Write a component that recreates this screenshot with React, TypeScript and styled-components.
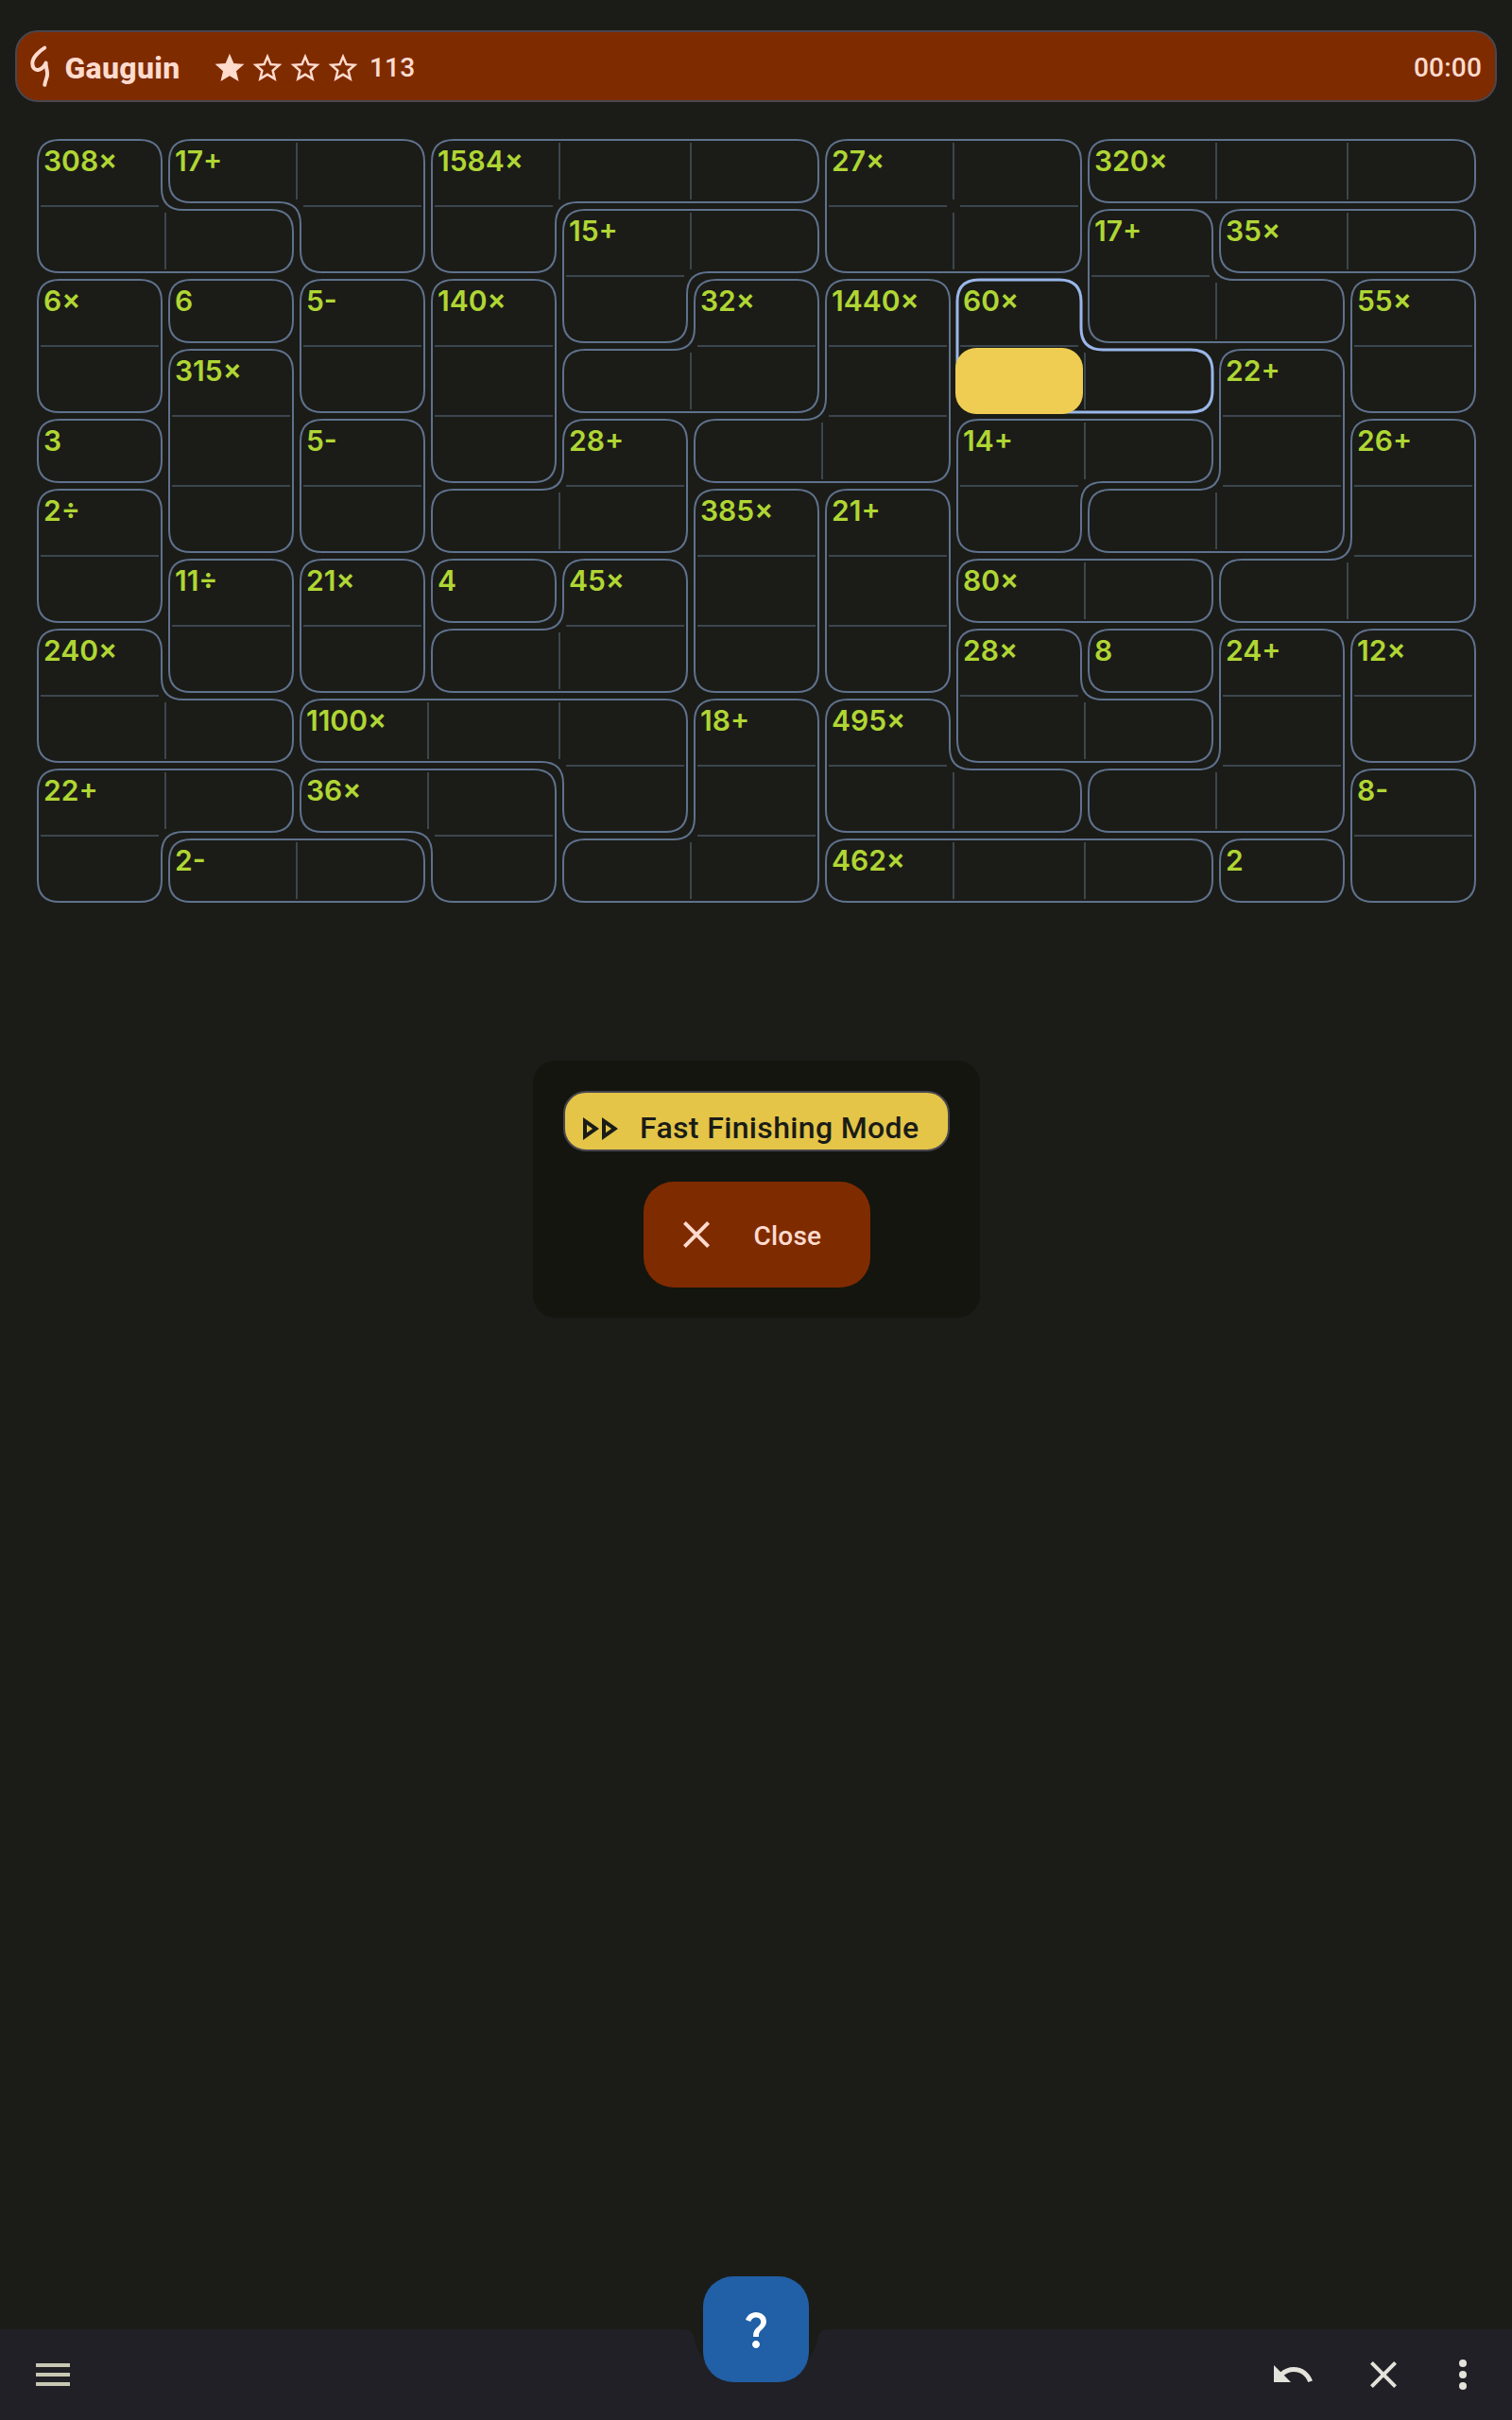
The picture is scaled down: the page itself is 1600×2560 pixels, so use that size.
import React from "react";
import styled, { createGlobalStyle } from "styled-components";

const COLS = 11;
const ROWS = 11;
const CW = 139;
const CH = 74;
const INSET = 4;
const CORNER = 23;

// One letter per cell; cells that share a letter belong to the same cage.
const LAYOUT = [
  "ABBCCCDDEEE",
  "AABCFFDDGHH",
  "IJKLFMNOGGP",
  "IQKLMMNOORP",
  "SQTLUNNVVRW",
  "XQTUUYZVRRW",
  "XabcdYZeeWW",
  "fabddYZghij",
  "ffkkklmggij",
  "nnooklmmiip",
  "nqqollrrrsp",
];

const CLUES: Record<string, string> = {
  A: "308×", B: "17+", C: "1584×", D: "27×", E: "320×", F: "15+", G: "17+", H: "35×",
  I: "6×", J: "6", K: "5-", L: "140×", M: "32×", N: "1440×", O: "60×", P: "55×",
  Q: "315×", R: "22+", S: "3", T: "5-", U: "28+", V: "14+", W: "26+", X: "2÷",
  Y: "385×", Z: "21+", a: "11÷", b: "21×", c: "4", d: "45×", e: "80×", f: "240×",
  g: "28×", h: "8", i: "24+", j: "12×", k: "1100×", l: "18+", m: "495×", n: "22+",
  o: "36×", p: "8-", q: "2-", r: "462×", s: "2",
};

const SELECTED_CAGE = "O";
const SELECTED_CELL = { row: 3, col: 7 };

const at = (r: number, c: number) => LAYOUT[r]?.[c] ?? "";

type Edge = { x: number; y: number; dx: number; dy: number };

/** Walks the border of a cage clockwise and returns its rounded, inset outline. */
function cagePath(id: string): string {
  const edges: Edge[] = [];
  for (let r = 0; r < ROWS; r++) {
    for (let c = 0; c < COLS; c++) {
      if (at(r, c) !== id) continue;
      if (at(r - 1, c) !== id) edges.push({ x: c, y: r, dx: 1, dy: 0 });
      if (at(r, c + 1) !== id) edges.push({ x: c + 1, y: r, dx: 0, dy: 1 });
      if (at(r + 1, c) !== id) edges.push({ x: c + 1, y: r + 1, dx: -1, dy: 0 });
      if (at(r, c - 1) !== id) edges.push({ x: c, y: r + 1, dx: 0, dy: -1 });
    }
  }
  const pts: [number, number][] = [];
  let cur = edges[0];
  do {
    const ex = cur.x + cur.dx;
    const ey = cur.y + cur.dy;
    const next = edges.find((e) => e.x === ex && e.y === ey)!;
    if (next.dx !== cur.dx || next.dy !== cur.dy) {
      pts.push([
        ex * CW + INSET * (-cur.dy - next.dy),
        ey * CH + INSET * (cur.dx + next.dx),
      ]);
    }
    cur = next;
  } while (cur !== edges[0]);

  const n = pts.length;
  const toward = (a: [number, number], b: [number, number]) => {
    const len = Math.hypot(b[0] - a[0], b[1] - a[1]);
    return [a[0] + ((b[0] - a[0]) / len) * CORNER, a[1] + ((b[1] - a[1]) / len) * CORNER];
  };
  return (
    pts
      .map((p, i) => {
        const s = toward(p, pts[(i + n - 1) % n]);
        const e = toward(p, pts[(i + 1) % n]);
        return `${i ? "L" : "M"}${s[0]} ${s[1]}Q${p[0]} ${p[1]} ${e[0]} ${e[1]}`;
      })
      .join("") + "Z"
  );
}

const Global = createGlobalStyle`
  * { box-sizing: border-box; }
  body { margin: 0; background: #1b1c17; }
`;

const Screen = styled.div`
  width: 1600px;
  height: 2560px;
  display: flex;
  flex-direction: column;
  background: #1b1c17;
  font-family: Roboto, sans-serif;
  overflow: hidden;
`;

const Header = styled.header`
  height: 76px;
  margin: 32px 16px 0;
  padding: 0 14px;
  display: flex;
  align-items: center;
  flex: none;
  background: #7f2b00;
  border: 2px solid #48464f;
  border-radius: 24px;
  color: #ffdbce;
`;

const Logo = styled.svg`
  width: 24px;
  height: 48px;
  flex: none;
`;

const Title = styled.h1`
  margin: 0 0 0 12px;
  padding: 4px 0 0 0.5px;
  width: 155px;
  font-size: 32px;
  line-height: 40px;
  font-weight: 800;
  letter-spacing: 0.3px;
`;

const Stars = styled.div`
  display: flex;
  width: 160px;
`;

const Star = styled.svg`
  width: 40px;
  height: 40px;
`;

const Value = styled.span<{ $push?: boolean }>`
  padding-top: 4px;
  font-size: 28px;
  line-height: 32px;
  font-weight: 500;
  letter-spacing: 0.2px;
  margin-left: ${(p) => (p.$push ? "auto" : "8px")};
`;

const Board = styled.main`
  position: relative;
  margin: 36px 0 0 36px;
  display: grid;
  grid-template-columns: repeat(${COLS}, ${CW}px);
  grid-template-rows: repeat(${ROWS}, ${CH}px);
  flex: none;
`;

const Outlines = styled.svg`
  position: absolute;
  inset: 0;
  width: 100%;
  height: 100%;
  overflow: visible;
  fill: none;
`;

const Cell = styled.div<{ $right: boolean; $below: boolean }>`
  position: relative;
  padding: 4px 0 0 10px;
  &::before {
    content: "";
    display: ${(p) => (p.$right ? "block" : "none")};
    position: absolute;
    right: -1px;
    top: 7px;
    bottom: 7px;
    width: 2px;
    background: #3c464f;
  }
  &::after {
    content: "";
    display: ${(p) => (p.$below ? "block" : "none")};
    position: absolute;
    left: 7px;
    right: 7px;
    bottom: -1px;
    height: 2px;
    background: #3c464f;
  }
`;

const Clue = styled.span`
  display: block;
  font-family: Inter, sans-serif;
  font-size: 30px;
  line-height: 44px;
  font-weight: 600;
  color: #b0d634;
  white-space: nowrap;
`;

const Cursor = styled.div`
  width: 135px;
  height: 70px;
  margin: -2px 0 0 -8px;
  border-radius: 22px;
  background: #eecd52;
`;

const Panel = styled.section`
  width: 473px;
  margin: 164px 0 0 564px;
  padding: 32px;
  display: flex;
  flex-direction: column;
  align-items: center;
  gap: 32px;
  flex: none;
  background: #14150f;
  border-radius: 24px;
`;

const FastMode = styled.div`
  width: 409px;
  height: 64px;
  padding: 16px 0 0 13px;
  display: flex;
  align-items: center;
  background: #e4c548;
  border: 2px solid #48464f;
  border-radius: 24px;
  color: #1b1c17;
  font-size: 32px;
  font-weight: 500;
  letter-spacing: 0.35px;
  white-space: nowrap;
`;

const FastIcon = styled.svg`
  width: 48px;
  height: 48px;
  flex: none;
`;

const FastLabel = styled.span`
  margin: 0 0 2px 18px;
`;

const CloseButton = styled.button`
  width: 240px;
  height: 112px;
  padding: 0 0 0 32px;
  display: flex;
  align-items: center;
  border: 0;
  border-radius: 32px;
  background: #7f2b00;
  color: #ffdbce;
  font: 500 28px Roboto, sans-serif;
  letter-spacing: 0.2px;
`;

const Icon48 = styled.svg`
  width: 48px;
  height: 48px;
  flex: none;
`;

const CloseLabel = styled.span`
  margin: 2px 0 0 37px;
`;

const BottomBar = styled.footer`
  position: relative;
  height: 96px;
  margin-top: auto;
  padding: 0 28px 0 32px;
  display: flex;
  align-items: center;
  justify-content: space-between;
  flex: none;
  color: #e4e3db;
`;

const BarShape = styled.svg`
  position: absolute;
  inset: 0;
  width: 1600px;
  height: 96px;
`;

const Actions = styled.div`
  position: relative;
  display: flex;
  gap: 48px;
`;

const OverflowIcon = styled(Icon48)`
  margin-left: -12px;
`;

const Menu = styled(Icon48)`
  position: relative;
`;

const HintButton = styled.button`
  position: absolute;
  left: 744px;
  top: -56px;
  width: 112px;
  height: 112px;
  padding: 0;
  display: grid;
  place-items: center;
  border: 0;
  border-radius: 32px;
  background: #215fa6;
`;

const STAR_FULL = "M12 17.27 18.18 21l-1.64-7.03L22 9.24l-7.19-.61L12 2 9.19 8.63 2 9.24l5.46 4.73L5.82 21z";
const STAR_OPEN =
  "m22 9.24-7.19-.62L12 2 9.19 8.63 2 9.24l5.46 4.73L5.82 21 12 17.27 18.18 21l-1.63-7.03L22 9.24zM12 15.4l-3.76 2.27 1-4.28-3.32-2.88 4.38-.38L12 6.1l1.71 4.04 4.38.38-3.32 2.88 1 4.28L12 15.4z";
const CROSS =
  "M19 6.41 17.59 5 12 10.59 6.41 5 5 6.41 10.59 12 5 17.59 6.41 19 12 13.41 17.59 19 19 17.59 13.41 12z";

const cages = Object.keys(CLUES);
const seen = new Set<string>();
const cells = LAYOUT.flatMap((line, row) =>
  [...line].map((id, col) => {
    const first = !seen.has(id);
    seen.add(id);
    return { id, row, col, clue: first ? CLUES[id] : "" };
  }),
);

export default function App() {
  return (
    <Screen>
      <Global />
      <Header>
        <Logo viewBox="0 0 24 48" fill="none" stroke="#ffdbce" strokeLinecap="round" strokeLinejoin="round">
          <path
            d="M15.2 4.6C9.500 8 2.600 14.500 2.300 20.500C2.100 25.500 4.800 28.300 8.300 27.900C12.500 27.300 15.500 23 16.600 20.500C16.200 25 18.600 28.500 18 33.500C17.500 37.500 15.600 40 15.300 43.800"
            strokeWidth="4"
          />
        </Logo>
        <Title>Gauguin</Title>
        <Stars>
          {[0, 1, 2, 3].map((i) => (
            <Star key={i} viewBox="0 0 24 24" fill="#ffdbce">
              <path d={i === 0 ? STAR_FULL : STAR_OPEN} transform="translate(.9 2.17) scale(.925)" />
            </Star>
          ))}
        </Stars>
        <Value>113</Value>
        <Value $push>00:00</Value>
      </Header>

      <Board>
        <Outlines>
          {cages.map((id) => (
            <path
              key={id}
              d={cagePath(id)}
              stroke={id === SELECTED_CAGE ? "#9ab6ea" : "#5f718d"}
              strokeWidth={id === SELECTED_CAGE ? 3 : 2}
            />
          ))}
        </Outlines>
        {cells.map(({ id, row, col, clue }) => (
          <Cell key={`${row}-${col}`} $right={at(row, col + 1) === id} $below={at(row + 1, col) === id}>
            {clue && <Clue>{clue}</Clue>}
            {row === SELECTED_CELL.row && col === SELECTED_CELL.col && <Cursor />}
          </Cell>
        ))}
      </Board>

      <Panel>
        <FastMode>
          <FastIcon viewBox="0 0 24 24" fill="currentColor">
            <path d="M15 9.86 18.03 12 15 14.14V9.86M5 9.86 8.03 12 5 14.14V9.86M13 6v12l8.5-6L13 6zM3 6v12l8.5-6L3 6z" />
          </FastIcon>
          <FastLabel>Fast Finishing Mode</FastLabel>
        </FastMode>
        <CloseButton>
          <Icon48 viewBox="0 0 24 24" fill="currentColor">
            <path d={CROSS} />
          </Icon48>
          <CloseLabel>Close</CloseLabel>
        </CloseButton>
      </Panel>

      <BottomBar>
        <BarShape viewBox="0 0 1600 96">
          <path
            fill="#212026"
            d="M0 0H725.7A8 8 0 0 1 733.5 6.3A68 68 0 0 0 748 35.8H852A68 68 0 0 0 866.5 6.3A8 8 0 0 1 874.3 0H1600V96H0Z"
          />
        </BarShape>
        <Menu viewBox="0 0 24 24" fill="#c8c8b4">
          <path d="M3 6h18v2H3zM3 11h18v2H3zM3 16h18v2H3z" />
        </Menu>
        <Actions>
          <Icon48 viewBox="0 0 24 24" fill="currentColor">
            <path d="M12.5 8c-2.65 0-5.05 1-6.9 2.6L2 7v9h9l-3.62-3.62c1.39-1.16 3.16-1.88 5.12-1.88 3.54 0 6.55 2.31 7.6 5.5l2.37-.78C21.08 11.03 17.15 8 12.5 8z" />
          </Icon48>
          <Icon48 viewBox="0 0 24 24" fill="currentColor">
            <path d={CROSS} />
          </Icon48>
          <OverflowIcon viewBox="0 0 24 24" fill="currentColor">
            <circle cx="12" cy="6" r="2" />
            <circle cx="12" cy="12" r="2" />
            <circle cx="12" cy="18" r="2" />
          </OverflowIcon>
        </Actions>
        <HintButton aria-label="Hint">
          <Icon48 viewBox="0 0 24 24" fill="#fff">
            <path d="M11.07 12.85c.77-1.39 2.25-2.21 3.11-3.44.91-1.29.4-3.7-2.18-3.7-1.69 0-2.52 1.28-2.87 2.34L6.54 6.96C7.25 4.83 9.18 3 11.99 3c2.35 0 3.96 1.07 4.78 2.41.7 1.15 1.11 3.3.03 4.9-1.2 1.77-2.35 2.31-2.97 3.45-.25.46-.35.76-.35 2.24h-2.89c-.01-.78-.13-2.05.48-3.15zM14 20c0 1.1-.9 2-2 2s-2-.9-2-2 .9-2 2-2 2 .9 2 2z" />
          </Icon48>
        </HintButton>
      </BottomBar>
    </Screen>
  );
}
